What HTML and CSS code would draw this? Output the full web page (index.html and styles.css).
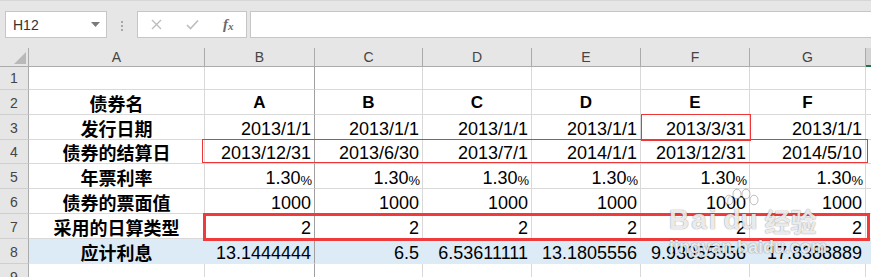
FILE: index.html
```html
<!DOCTYPE html>
<html lang="zh">
<head>
    <meta charset="UTF-8">
    <meta name="viewport" content="width=device-width, initial-scale=1.0">
    <title>债券应计利息</title>
    <link rel="stylesheet" href="styles.css">
</head>
<body>
    <div class="toolbar">
        <div class="namebox">
            <span>H12</span>
            <svg width="9" height="5" viewBox="0 0 9 5"><path d="M0 0H9L4.5 5Z" fill="#7a7a7a"/></svg>
        </div>
        <div class="grip"><i></i><i></i><i></i></div>
        <div class="fxbox">
            <svg class="ic" width="11" height="11" viewBox="0 0 11 11"><path d="M1 1L10 10M10 1L1 10" stroke="#bdbdbd" stroke-width="1.4"/></svg>
            <svg class="ic" width="13" height="11" viewBox="0 0 13 11"><path d="M1 6L4.5 9.5L12 1.5" stroke="#bdbdbd" stroke-width="1.6" fill="none"/></svg>
            <span class="fx">f<sub>x</sub></span>
        </div>
        <div class="formula"></div>
    </div>

    <div class="sheet">
        <!-- 列标题 -->
        <div class="c corner"><svg width="12" height="12" viewBox="0 0 12 12"><path d="M12 0V12H0Z" fill="#b9b9b9"/></svg></div>
        <div class="c ch">A</div>
        <div class="c ch">B</div>
        <div class="c ch">C</div>
        <div class="c ch">D</div>
        <div class="c ch">E</div>
        <div class="c ch">F</div>
        <div class="c ch">G</div>
        <div class="c ch sel"></div>

        <!-- 1 -->
        <div class="c rh">1</div>
        <div class="c"></div><div class="c b"></div><div class="c"></div><div class="c"></div><div class="c"></div><div class="c"></div><div class="c"></div><div class="c"></div>

        <!-- 2 -->
        <div class="c rh">2</div>
        <div class="c lbl">债券名</div>
        <div class="c hd b">A</div>
        <div class="c hd">B</div>
        <div class="c hd">C</div>
        <div class="c hd">D</div>
        <div class="c hd">E</div>
        <div class="c hd">F</div>
        <div class="c"></div>

        <!-- 3 -->
        <div class="c rh">3</div>
        <div class="c lbl">发行日期</div>
        <div class="c num b">2013/1/1</div>
        <div class="c num">2013/1/1</div>
        <div class="c num">2013/1/1</div>
        <div class="c num">2013/1/1</div>
        <div class="c num">2013/3/31</div>
        <div class="c num">2013/1/1</div>
        <div class="c"></div>

        <!-- 4 -->
        <div class="c rh">4</div>
        <div class="c lbl">债券的结算日</div>
        <div class="c num b">2013/12/31</div>
        <div class="c num">2013/6/30</div>
        <div class="c num">2013/7/1</div>
        <div class="c num">2014/1/1</div>
        <div class="c num">2013/12/31</div>
        <div class="c num">2014/5/10</div>
        <div class="c"></div>

        <!-- 5 -->
        <div class="c rh">5</div>
        <div class="c lbl">年票利率</div>
        <div class="c num b">1.30<small>%</small></div>
        <div class="c num">1.30<small>%</small></div>
        <div class="c num">1.30<small>%</small></div>
        <div class="c num">1.30<small>%</small></div>
        <div class="c num">1.30<small>%</small></div>
        <div class="c num">1.30<small>%</small></div>
        <div class="c"></div>

        <!-- 6 -->
        <div class="c rh">6</div>
        <div class="c lbl">债券的票面值</div>
        <div class="c num b">1000</div>
        <div class="c num">1000</div>
        <div class="c num">1000</div>
        <div class="c num">1000</div>
        <div class="c num">1000</div>
        <div class="c num">1000</div>
        <div class="c"></div>

        <!-- 7 -->
        <div class="c rh">7</div>
        <div class="c lbl">采用的日算类型</div>
        <div class="c num b">2</div>
        <div class="c num">2</div>
        <div class="c num">2</div>
        <div class="c num">2</div>
        <div class="c num">2</div>
        <div class="c num">2</div>
        <div class="c"></div>

        <!-- 8 -->
        <div class="c rh">8</div>
        <div class="c lbl blue">应计利息</div>
        <div class="c num blue b">13.1444444</div>
        <div class="c num blue">6.5</div>
        <div class="c num blue">6.53611111</div>
        <div class="c num blue">13.1805556</div>
        <div class="c num blue">9.93055556</div>
        <div class="c num blue">17.8388889</div>
        <div class="c blue"></div>

        <!-- 9 -->
        <div class="c rh">9</div>
        <div class="c"></div><div class="c b"></div><div class="c"></div><div class="c"></div><div class="c"></div><div class="c"></div><div class="c"></div><div class="c"></div>

        <!-- 标注框 -->
        <div class="mark mark-e3"></div>
        <div class="mark mark-r4"></div>
        <div class="mark mark-r7"></div>

        <!-- 水印 -->
        <div class="wm">
            <div class="wm-logo">
                <span class="wm-bai">Bai</span>
                <span class="wm-du">
                    <svg width="36" height="18" viewBox="0 0 36 18">
                        <ellipse cx="6" cy="12" rx="4" ry="4.8"/>
                        <ellipse cx="14" cy="6" rx="4" ry="4.8"/>
                        <ellipse cx="23" cy="6" rx="4" ry="4.8"/>
                        <ellipse cx="31" cy="12" rx="4" ry="4.8"/>
                    </svg>
                    du
                </span>
                <span class="wm-jy">经验</span>
            </div>
            <div class="wm-url">jingyan.baidu.com</div>
        </div>
    </div>
</body>
</html>
```

FILE: styles.css
```css
* {
    margin: 0;
    padding: 0;
    box-sizing: border-box;
}

body {
    width: 871px;
    height: 277px;
    overflow: hidden;
    background-color: #e6e6e6;
    font-family: "Liberation Sans", Arial, sans-serif;
}

/* 编辑栏 */
.toolbar {
    height: 48px;
    display: flex;
    align-items: flex-start;
    padding-top: 11px;
    border-top: 1px solid #d6d6d6;
}

.namebox {
    margin-left: 5px;
    width: 102px;
    height: 27px;
    margin-top: -1px;
    background-color: #fff;
    border: 1px solid #c6c6c6;
    display: flex;
    align-items: center;
    justify-content: space-between;
    padding: 0 6px 0 7px;
    font-size: 14px;
    color: #333;
}

.grip {
    width: 30px;
    height: 27px;
    display: flex;
    flex-direction: column;
    align-items: center;
    justify-content: center;
    gap: 2px;
}

.grip i {
    width: 2px;
    height: 2px;
    background-color: #a8a8a8;
}

.fxbox {
    width: 110px;
    height: 27px;
    margin-top: -1px;
    background-color: #fff;
    border: 1px solid #c6c6c6;
    display: flex;
    align-items: center;
    padding-left: 13px;
}

.fxbox .ic:nth-child(2) {
    margin-left: 24px;
}

.fx {
    margin-left: 24px;
    font-family: "Liberation Serif", serif;
    font-style: italic;
    font-weight: bold;
    font-size: 15px;
    color: #6a6a6a;
}

.fx sub {
    font-size: 11px;
    vertical-align: -1px;
}

.formula {
    flex: 1;
    height: 27px;
    margin-top: -1px;
    margin-left: 3px;
    background-color: #fff;
    border: 1px solid #c6c6c6;
    border-right: none;
}

/* 表格 */
.sheet {
    position: relative;
    display: grid;
    grid-template-columns: 29px 176px 110px 108px 109px 109px 109px 116px 1fr;
    grid-template-rows: 19px 23px 25px 25px 24px 25px 25px 25px 25px 25px;
    background-color: #fff;
}

.c {
    border-right: 1px solid #d9d9d9;
    border-bottom: 1px solid #d9d9d9;
    display: flex;
    align-items: flex-end;
    padding: 0 3px 1px;
    font-size: 18px;
    color: #000;
    white-space: nowrap;
    overflow: hidden;
}

.c.b {
    border-right-color: #a0a0a0;
}

.ch, .rh, .corner {
    background-color: #e6e6e6;
    border-right-color: #ababab;
    border-bottom-color: #ababab;
    justify-content: center;
    font-size: 14px;
    color: #444;
}

.ch {
    padding-bottom: 1px;
}

.ch.sel {
    background-color: #d3d3d3;
    border-bottom: 2px solid #217346;
}

.rh {
    border-bottom-color: #cfcfcf;
    padding-bottom: 3px;
}

.corner {
    justify-content: flex-end;
    padding: 0 2px 2px 0;
}

.lbl {
    justify-content: center;
    font-family: "Noto Sans CJK SC", sans-serif;
    font-weight: bold;
    font-size: 18px;
    line-height: 1;
    padding-bottom: 2px;
}

.hd {
    justify-content: center;
    font-weight: bold;
    font-size: 17px;
}

.num {
    justify-content: flex-end;
    line-height: 1;
}

.num small {
    font-size: 13px;
    letter-spacing: -1px;
}

.blue {
    background-color: #ddebf7;
    border-right-color: #ddebf7;
    border-bottom-color: #ddebf7;
}

.blue.b {
    border-right-color: #a0a0a0;
}

/* 红框标注 */
.mark {
    position: absolute;
    border: 1px solid #ee3636;
    pointer-events: none;
}

.mark-e3 {
    left: 641px;
    top: 66px;
    width: 110px;
    height: 27px;
}

.mark-r4 {
    left: 202px;
    top: 91px;
    width: 666px;
    height: 24px;
}

.mark-r7 {
    left: 203px;
    top: 165px;
    width: 667px;
    height: 28px;
    border-width: 3px;
    border-color: #ef3b3b;
}

/* 水印 */
.wm {
    position: absolute;
    left: 669px;
    top: 140px;
    color: rgba(255, 255, 255, 0.85);
    text-shadow: 0 0 1px rgba(0, 0, 0, 0.45), 0 0 2px rgba(0, 0, 0, 0.15);
    pointer-events: none;
}

.wm-logo {
    display: flex;
    align-items: flex-end;
    font-size: 28px;
    font-weight: bold;
    line-height: 1;
}

.wm-bai {
    letter-spacing: 2px;
}

.wm-du {
    position: relative;
    padding-top: 18px;
    width: 44px;
    text-align: center;
}

.wm-du svg {
    position: absolute;
    left: 4px;
    top: 0;
    fill: rgba(255, 255, 255, 0.85);
    stroke: rgba(0, 0, 0, 0.25);
}

.wm-jy {
    margin-left: 2px;
    font-family: "Noto Sans CJK SC", sans-serif;
    font-size: 26px;
}

.wm-url {
    margin-top: 3px;
    font-size: 18px;
    font-weight: bold;
}
```
